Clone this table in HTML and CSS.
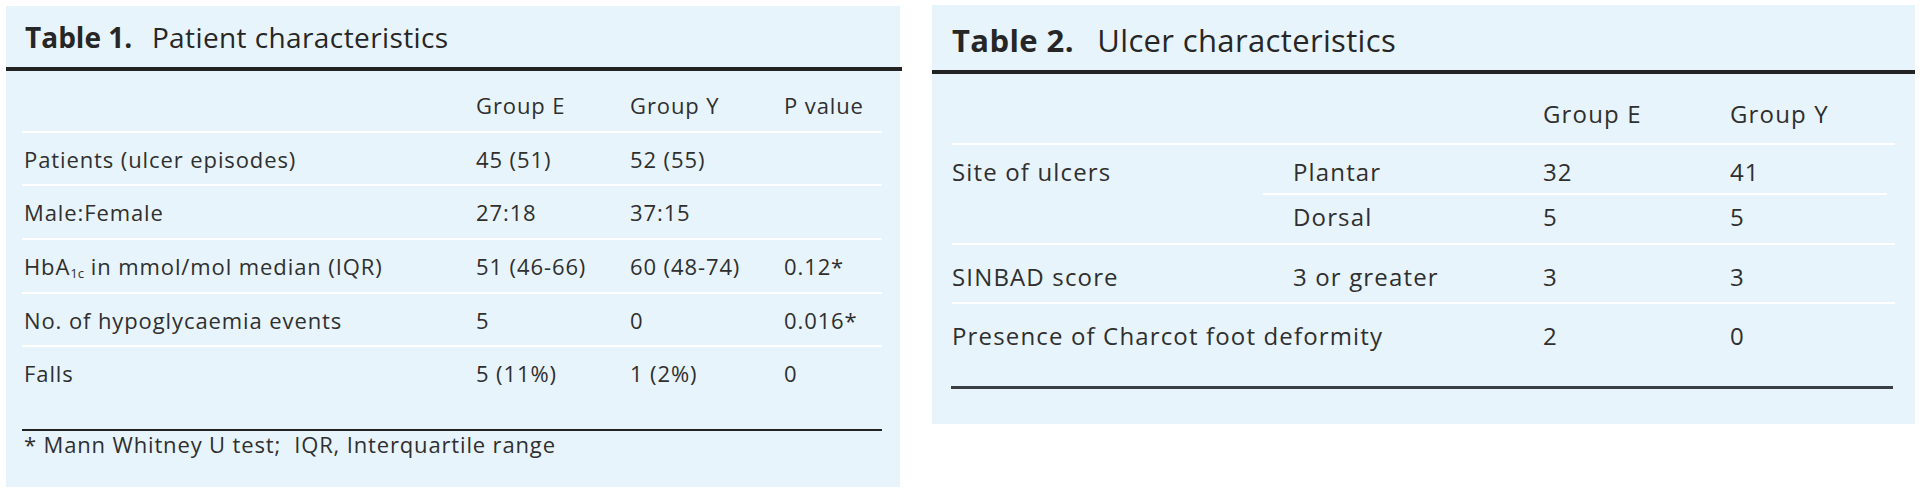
FILE: index.html
```html
<!DOCTYPE html>
<html lang="en">
<head>
<meta charset="utf-8">
<title>Tables</title>
<link rel="stylesheet" href="styles.css">
</head>
<body>
<div class="page">
  <section class="panel panel-one">
    <h2 class="title"><b>Table 1.</b> Patient characteristics</h2>
    <div class="thick-rule"></div>
    <div class="grid grid-one">
      <div class="cell head"></div>
      <div class="cell head">Group E</div>
      <div class="cell head">Group Y</div>
      <div class="cell head">P value</div>

      <div class="cell">Patients (ulcer episodes)</div>
      <div class="cell">45 (51)</div>
      <div class="cell">52 (55)</div>
      <div class="cell"></div>

      <div class="cell">Male:Female</div>
      <div class="cell">27:18</div>
      <div class="cell">37:15</div>
      <div class="cell"></div>

      <div class="cell">HbA<sub>1c</sub> in mmol/mol median (IQR)</div>
      <div class="cell">51 (46-66)</div>
      <div class="cell">60 (48-74)</div>
      <div class="cell">0.12*</div>

      <div class="cell">No. of hypoglycaemia events</div>
      <div class="cell">5</div>
      <div class="cell">0</div>
      <div class="cell">0.016*</div>

      <div class="cell last">Falls</div>
      <div class="cell last">5 (11%)</div>
      <div class="cell last">1 (2%)</div>
      <div class="cell last">0</div>
    </div>
    <div class="foot-rule"></div>
    <p class="footnote">* Mann Whitney U test;&nbsp; IQR, Interquartile range</p>
  </section>

  <section class="panel panel-two">
    <h2 class="title"><b>Table 2.</b> Ulcer characteristics</h2>
    <div class="thick-rule"></div>
    <div class="grid grid-two">
      <div class="cell head"></div>
      <div class="cell head"></div>
      <div class="cell head">Group E</div>
      <div class="cell head">Group Y</div>

      <div class="cell site">Site of ulcers</div>
      <div class="cell plantar sub pad">Plantar</div>
      <div class="cell plantar sub">32</div>
      <div class="cell plantar sub end">41</div>

      <div class="cell dorsal pad">Dorsal</div>
      <div class="cell dorsal">5</div>
      <div class="cell dorsal">5</div>

      <div class="cell tall">SINBAD score</div>
      <div class="cell tall pad">3 or greater</div>
      <div class="cell tall">3</div>
      <div class="cell tall">3</div>

      <div class="cell tall last">Presence of Charcot foot deformity</div>
      <div class="cell tall last"></div>
      <div class="cell tall last">2</div>
      <div class="cell tall last">0</div>
    </div>
    <div class="foot-rule"></div>
  </section>
</div>
</body>
</html>
```

FILE: styles.css
```css
* { box-sizing: border-box; }

html, body {
  margin: 0;
  padding: 0;
  background: #ffffff;
}

body {
  font-family: "Open Sans", "Liberation Sans", sans-serif;
  color: #2f2f2f;
}

.page {
  display: flex;
  align-items: flex-start;
  gap: 32px;
  padding: 6px 0 0 6px;
}

.panel {
  background: #e8f4fc;
}

.panel-one {
  width: 894px;
  height: 481px;
}

.panel-two {
  width: 983px;
  height: 419px;
  margin-top: -1px;
}

/* titles */
.title {
  margin: 0;
  font-weight: 400;
  white-space: nowrap;
  color: #262626;
}

.title b {
  font-weight: 700;
  letter-spacing: 0;
  margin-right: 12px;
}

.panel-one .title {
  font-size: 28px;
  line-height: 32px;
  letter-spacing: 0.4px;
  padding: 15px 0 0 19px;
  height: 61px;
}

.panel-two .title {
  font-size: 31px;
  line-height: 36px;
  letter-spacing: 0.35px;
  padding: 17px 0 0 20px;
  height: 65px;
}

.panel-two .title b {
  letter-spacing: 0.4px;
  margin-right: 15px;
}

.thick-rule {
  height: 4px;
  background: #232323;
}

.panel-one .thick-rule { margin-right: -2px; }

/* grids */
.grid {
  display: grid;
  white-space: nowrap;
}

.cell {
  border-bottom: 2px solid #ffffff;
}

.cell.last { border-bottom: 0; }

sub {
  font-size: 0.6em;
  vertical-align: -0.25em;
  line-height: 0;
  letter-spacing: 0;
}

/* Table 1 */
.grid-one {
  width: 860px;
  margin-left: 16px;
  grid-template-columns: 452px 154px 154px 100px;
  grid-template-rows: 62px 53px 54px 54px 53px 53px;
  font-size: 22px;
  line-height: 30px;
  letter-spacing: 0.9px;
}

.grid-one .cell {
  padding: 11px 0 0 2px;
}

.grid-one .cell.head {
  padding-top: 19px;
}

.panel-one .foot-rule {
  height: 2px;
  background: #232323;
  margin: 29px 18px 0 16px;
}

.footnote {
  margin: 0;
  padding: 0 0 0 18px;
  font-size: 22px;
  line-height: 26px;
  letter-spacing: 0.85px;
}

/* Table 2 */
.grid-two {
  width: 943px;
  margin-left: 20px;
  grid-template-columns: 311px 280px 187px 165px;
  grid-template-rows: 71px 50px 50px 59px 59px;
  font-size: 24px;
  line-height: 33px;
  letter-spacing: 1.15px;
}

.grid-two .cell.head { padding-top: 22.5px; }

.grid-two .cell.pad { padding-left: 30px; }

.grid-two .site {
  grid-row: span 2;
  padding-top: 9.5px;
}

.grid-two .plantar { padding-top: 9.5px; }
.grid-two .plantar.end { margin-right: 8px; }

.grid-two .dorsal { padding-top: 4.5px; }

.grid-two .tall { padding-top: 14.5px; }

.panel-two .foot-rule {
  height: 3px;
  background: #3a3f44;
  margin: 23px 22px 0 19px;
}
```
